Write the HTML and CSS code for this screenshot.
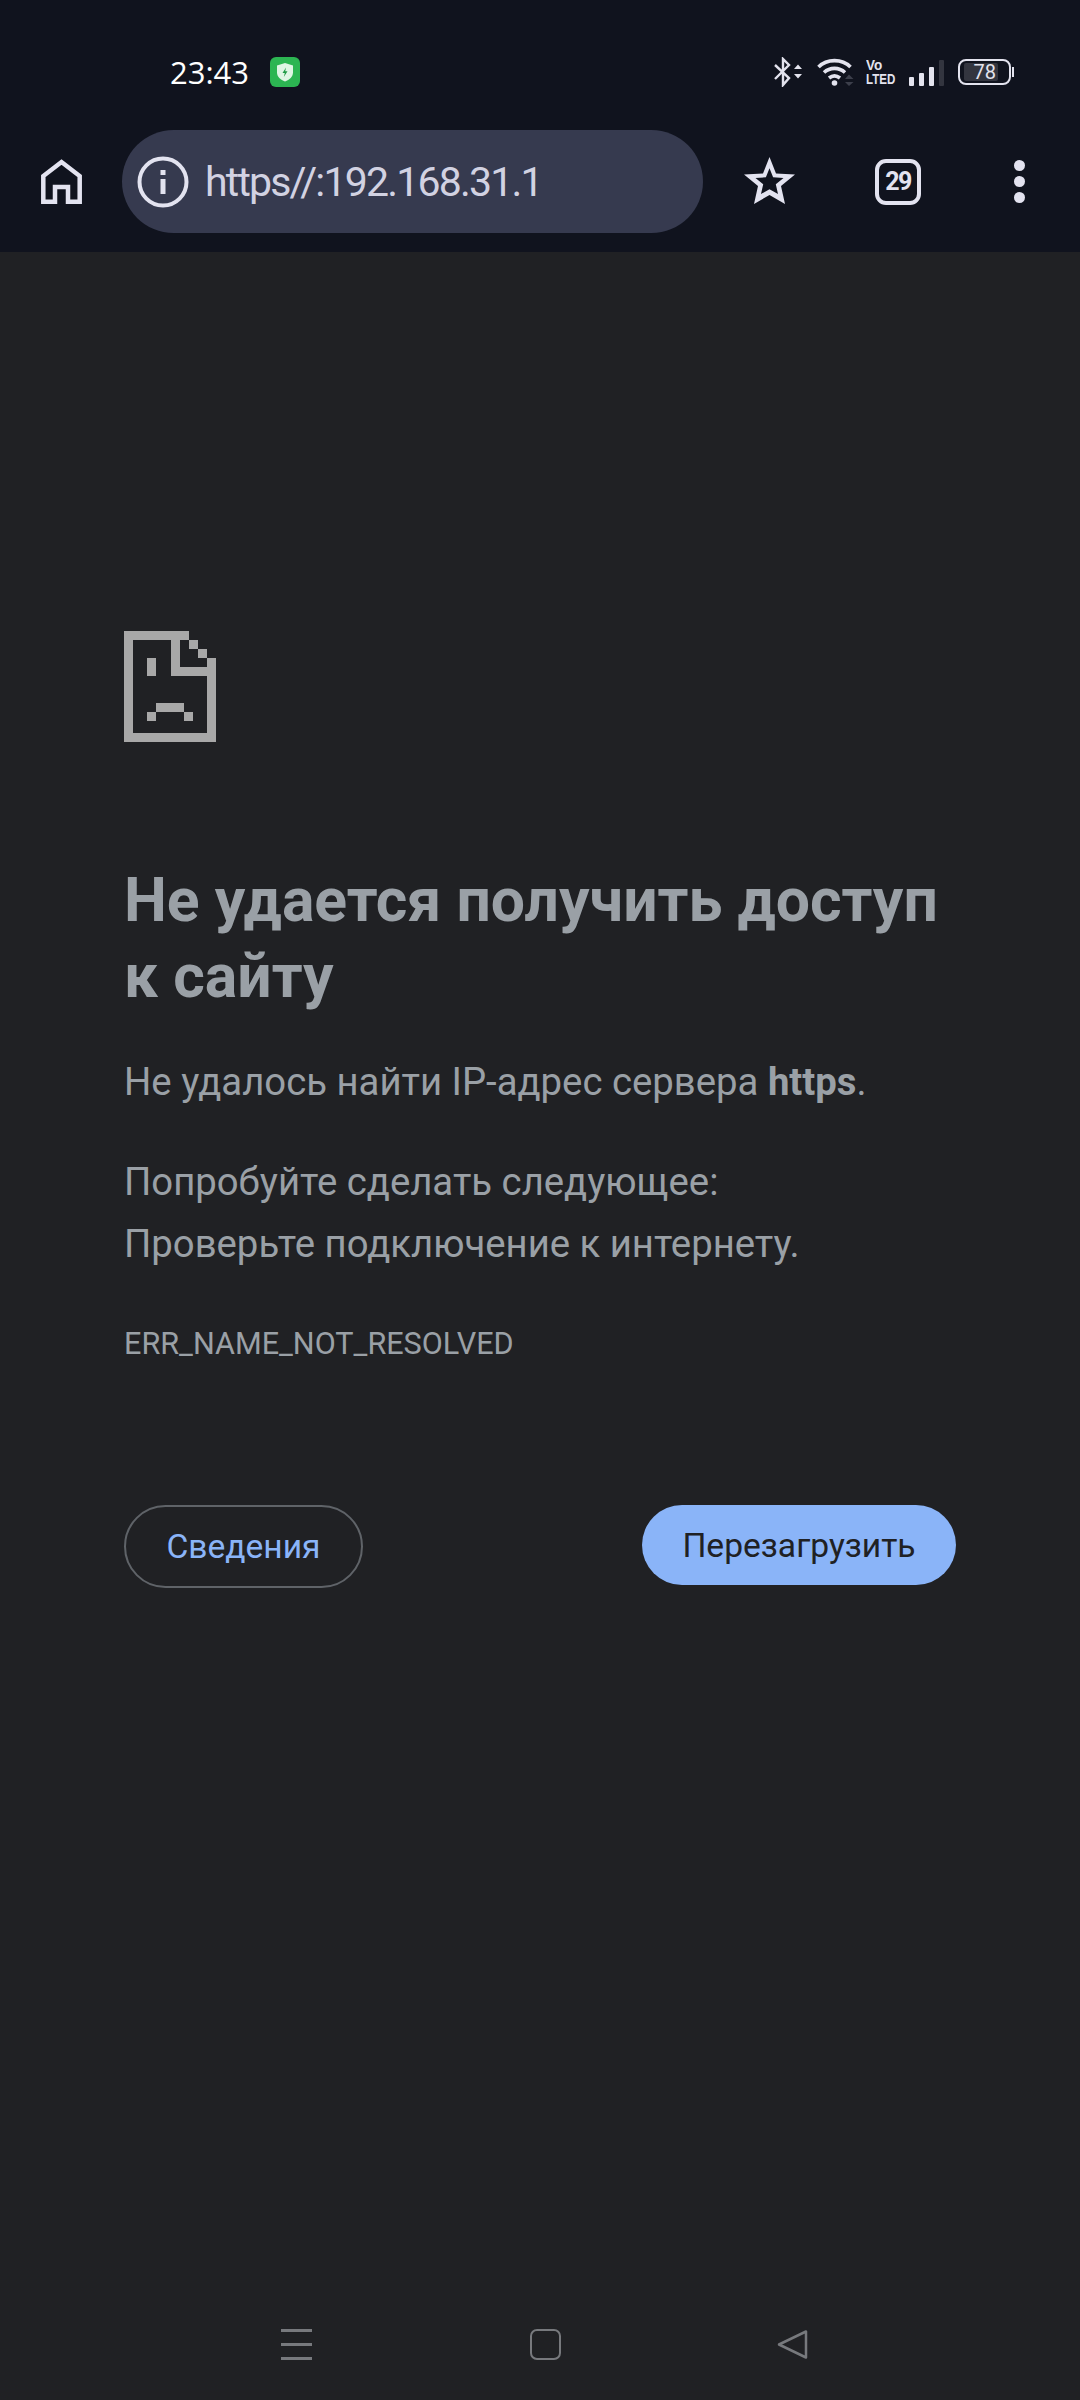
FILE: index.html
```html
<!DOCTYPE html>
<html lang="ru">
<head>
  <meta charset="UTF-8">
  <meta name="viewport" content="width=device-width, initial-scale=1.0">
  <title>https//:192.168.31.1</title>
  <link rel="stylesheet" href="styles.css">
</head>
<body>
  <header class="top">
    <div class="status-bar">
      <span class="clock">23:43</span>
      <svg class="vpn-badge" viewBox="0 0 30 30">
        <rect width="30" height="30" rx="6" fill="#2cb552"/>
        <path d="M15 6l8 2.500v7c0 4.500-3.500 7-8 9-4.500-2-8-4.500-8-9v-7z" fill="#dff5e4"/>
        <path d="M16 10.500l-3.500 5.500h2.300l-1 4 3.700-5.700h-2.300z" fill="#1f9a45"/>
      </svg>
      <div class="status-icons">
        <svg class="ic-bt" viewBox="0 0 30 30">
          <path d="M1 8l14 13-6 7V2l6 6L1 22" fill="none" stroke="#e3e3ee" stroke-width="2.400"/>
          <path d="M20 12l4-4.500 4 4.500zM20 17l4 4.500 4-4.500z" fill="#e3e3ee"/>
        </svg>
        <svg class="ic-wifi" viewBox="0 0 37 28">
          <path d="M1.500 9C10 .5 25 .5 33.500 9M7 14.500c6-5.500 15-5.500 21 0M12 20c3.500-2.800 7.500-2.800 11 0" fill="none" stroke="#e3e3ee" stroke-width="3.600"/>
          <circle cx="17.500" cy="25" r="2.800" fill="#e3e3ee"/>
          <path d="M28 21l4-4.500 4.500 4.500zM28 24l4 4 4.500-4z" fill="#3c3f4b"/>
        </svg>
        <div class="volte"><span class="volte-vo">Vo</span><span class="volte-lte">LTED</span></div>
        <div class="signal">
          <i class="bar-1"></i>
          <i class="bar-2"></i>
          <i class="bar-3"></i>
          <i class="bar-4"></i>
        </div>
        <div class="battery">
          <div class="battery-body"><span class="battery-level">78</span></div>
          <i class="battery-nub"></i>
        </div>
      </div>
    </div>

    <div class="toolbar">
      <svg class="ic-home" viewBox="0 0 41 45">
        <path d="M2.300 42.700V17L20.500 3 38.700 17v25.700H27V28H14v14.700z" fill="none" stroke="#e3e3f0" stroke-width="4.500"/>
      </svg>
      <div class="url-bar">
        <svg class="ic-info" viewBox="0 0 52 52">
          <circle cx="26" cy="26" r="23.500" fill="none" stroke="#e3e3f0" stroke-width="4"/>
          <rect x="23.500" y="23" width="5" height="15" fill="#e3e3f0"/>
          <rect x="23.500" y="14" width="5" height="5" fill="#e3e3f0"/>
        </svg>
        <span class="url-text">https//:192.168.31.1</span>
      </div>
      <svg class="ic-star" viewBox="0 0 51 47">
        <path fill="#e3e3f0" fill-rule="evenodd" d="M25.500 0L32 16.500l19 1L37 29l4 18-15.500-9L10 47l4-18L0 17.500l19-1zM25.500 11.200l-3.600 9.100-10.400.6 7.700 6.300-2.200 9.900 8.500-4.900 8.500 4.900-2.200-9.900 7.700-6.300-10.400-.6z"/>
      </svg>
      <div class="tabs">29</div>
      <div class="dots"><i></i><i></i><i></i></div>
    </div>
  </header>

  <main class="error-page">
    <svg class="sad-file" viewBox="0 0 92 111" shape-rendering="crispEdges">
      <path fill="#a8a8a8" fill-rule="evenodd" d="M0 0h65v9H56v27h27V27h9v84H0zM9 9v93h74V45H47V9z"/>
      <path fill="#a8a8a8" d="M65 9h9v9h-9zM74 18h9v9h-9zM23 27h9v18h-9zM32 72h28v9H32zM23 81h9v9h-9zM60 81h9v9h-9z"/>
    </svg>

    <h1>Не удается получить доступ к сайту</h1>
    <p class="lead">Не удалось найти IP-адрес сервера <b>https</b>.</p>
    <p class="hint">Попробуйте сделать следующее:<br>Проверьте подключение к интернету.</p>
    <p class="code">ERR_NAME_NOT_RESOLVED</p>

    <div class="actions">
      <button class="btn-details">Сведения</button>
      <button class="btn-reload">Перезагрузить</button>
    </div>
  </main>

  <nav class="nav-bar">
    <div class="nav-menu"><i></i><i></i><i></i></div>
    <div class="nav-home"></div>
    <svg class="nav-back" viewBox="0 0 31 31">
      <path d="M29 2.500v26L2 15.500z" fill="none" stroke="#77797d" stroke-width="2.500" stroke-linejoin="round"/>
    </svg>
  </nav>
</body>
</html>
```

FILE: styles.css
```css
* {
  margin: 0;
  padding: 0;
  box-sizing: border-box;
}

html, body {
  width: 1080px;
  height: 2400px;
}

body {
  background-color: #202124;
  color: #9aa0a6;
  font-family: Roboto, "Noto Sans", sans-serif;
  display: flex;
  flex-direction: column;
  overflow: hidden;
}

svg {
  display: block;
  flex-shrink: 0;
}

/* шапка браузера */
.top {
  background-color: #10131e;
  height: 252px;
  padding-top: 57px;
}

.status-bar {
  display: flex;
  align-items: center;
  height: 30px;
  padding-left: 170px;
  color: #fff;
}

.clock {
  font-family: "Open Sans", Roboto, sans-serif;
  font-size: 31px;
  font-weight: 500;
  width: 100px;
}

.vpn-badge {
  width: 30px;
  height: 30px;
}

.status-icons {
  display: flex;
  align-items: center;
  margin-left: auto;
  margin-right: 66px;
}

.ic-bt {
  width: 30px;
  height: 30px;
  margin-right: 13px;
}

.ic-wifi {
  width: 37px;
  height: 28px;
  margin-right: 12px;
}

.volte {
  width: 30px;
  color: #e3e3ee;
  font-family: "Liberation Sans", sans-serif;
  font-size: 15px;
  font-weight: bold;
  line-height: 14px;
  margin-right: 13px;
}

.volte span {
  display: block;
  white-space: nowrap;
  transform-origin: left center;
}

.volte-vo {
  transform: scaleX(0.9);
}

.volte-lte {
  transform: scaleX(0.77);
}

.signal {
  display: flex;
  align-items: flex-end;
  gap: 5px;
  height: 27px;
  margin-right: 14px;
}

.signal i {
  display: block;
  width: 5px;
  background-color: #e3e3ee;
  border-radius: 1px;
}

.signal .bar-1 { height: 9px; }
.signal .bar-2 { height: 13px; }
.signal .bar-3 { height: 19px; }
.signal .bar-4 { height: 26px; background-color: #33353f; }

.battery {
  display: flex;
  align-items: center;
  gap: 1px;
}

.battery-body {
  width: 53px;
  height: 26px;
  border: 2px solid #e3e3ee;
  border-radius: 8px;
  padding: 2px 0 2px 4px;
}

.battery-level {
  display: block;
  width: 34px;
  height: 18px;
  background-color: #33353f;
  color: #e3e3ee;
  border-radius: 2px;
  font-size: 20px;
  line-height: 18px;
  text-align: right;
  padding-right: 2px;
}

.battery-nub {
  display: block;
  width: 2px;
  height: 10px;
  background-color: #e3e3ee;
}

.toolbar {
  display: flex;
  align-items: center;
  height: 103px;
  margin-top: 43px;
  padding-left: 41px;
}

.ic-home {
  width: 41px;
  height: 45px;
  margin-right: 40px;
}

.url-bar {
  display: flex;
  align-items: center;
  width: 581px;
  height: 103px;
  border-radius: 52px;
  background-color: #363a4f;
  padding-left: 15px;
}

.ic-info {
  width: 52px;
  height: 52px;
  margin-right: 16px;
}

.url-text {
  color: #d2d2e2;
  font-size: 41px;
  letter-spacing: -1.800px;
}

.ic-star {
  width: 51px;
  height: 47px;
  margin-left: 41px;
  margin-bottom: 2px;
}

.tabs {
  width: 46px;
  height: 46px;
  margin-left: 80px;
  border: 4px solid #e3e3f0;
  border-radius: 11px;
  color: #e3e3f0;
  font-size: 25px;
  font-weight: bold;
  letter-spacing: -1.500px;
  line-height: 38px;
  text-align: center;
}

.dots {
  display: flex;
  flex-direction: column;
  gap: 5px;
  margin-left: 93px;
}

.dots i {
  display: block;
  width: 11px;
  height: 11px;
  border-radius: 50%;
  background-color: #e3e3f0;
}

/* страница ошибки */
.error-page {
  flex: 1;
  padding: 379px 124px 0;
}

.sad-file {
  width: 92px;
  height: 111px;
  margin-bottom: 121px;
}

h1 {
  color: #9aa0a6;
  font-size: 60.700px;
  font-weight: bold;
  line-height: 76px;
  margin-bottom: 36px;
}

.lead, .hint {
  font-size: 38.300px;
  line-height: 62px;
}

.lead {
  margin-bottom: 38px;
}

.code {
  font-size: 30.600px;
  line-height: 40px;
  margin-top: 49px;
}

.actions {
  display: flex;
  justify-content: space-between;
  align-items: flex-start;
  margin-top: 141px;
}

.btn-details, .btn-reload {
  font-family: Roboto, sans-serif;
  font-size: 33.600px;
  border-radius: 42px;
}

.btn-details {
  width: 239px;
  height: 83px;
  background: none;
  border: 2px solid #5f6368;
  color: #8ab4f8;
}

.btn-reload {
  width: 314px;
  height: 80px;
  background-color: #8ab4f8;
  border: none;
  color: #202124;
}

/* нижняя навигация */
.nav-bar {
  display: flex;
  height: 71px;
  padding-left: 281px;
  align-items: flex-start;
}

.nav-menu {
  display: flex;
  flex-direction: column;
  gap: 11px;
  width: 31px;
  margin-right: 218px;
}

.nav-menu i {
  display: block;
  height: 3px;
  background-color: #77797d;
}

.nav-home {
  width: 31px;
  height: 31px;
  border: 2.500px solid #77797d;
  border-radius: 7px;
  margin-right: 216px;
}

.nav-back {
  width: 31px;
  height: 31px;
}
```
